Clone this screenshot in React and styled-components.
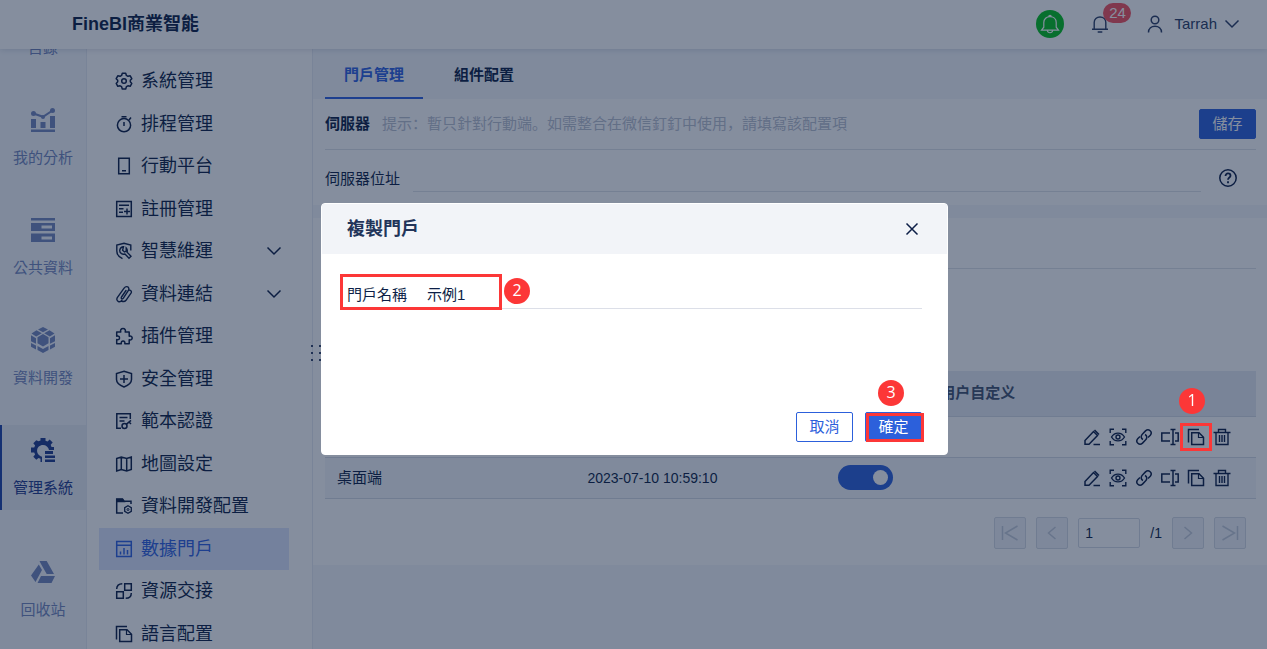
import React, { useState } from 'react';
import styled, { createGlobalStyle } from 'styled-components';

const GlobalStyle = createGlobalStyle`
  * {
    box-sizing: border-box;
  }
  body {
    margin: 0;
    overflow: hidden;
    background: #f4f7fb;
    color: #0d1f47;
    font-family: 'Liberation Sans', 'Noto Sans CJK TC', sans-serif;
    font-size: 15px;
    line-height: 20px;
  }
  h1, h2, ul {
    margin: 0;
    padding: 0;
  }
  ul {
    list-style: none;
  }
  a {
    color: inherit;
    text-decoration: none;
  }
  button, input {
    font: inherit;
    color: inherit;
  }
`;

//Icons
const Icon = ({ size = 18, children, ...rest }) => (
  <svg
    width={size}
    height={size}
    viewBox={`0 0 ${size} ${size}`}
    fill='none'
    stroke='currentColor'
    strokeWidth='1.5'
    aria-hidden='true'
    {...rest}
  >
    {children}
  </svg>
);

const GearIcon = () => (
  <Icon strokeLinejoin='round'>
    <path d='M7.3 1.2h3.4l.7 2.2 1.5.9 2.3-.5 1.6 2.9-1.5 1.6v1.5l1.5 1.6-1.6 2.9-2.3-.5-1.5.9-.7 2.2H7.3l-.7-2.2-1.5-.9-2.3.5-1.6-2.9 1.5-1.6V8.3L1.2 6.7l1.6-2.9 2.3.5 1.5-.9z' />
    <circle cx='9' cy='9' r='2.3' />
  </Icon>
);

const TimerIcon = () => (
  <Icon>
    <circle cx='9' cy='10.2' r='6.6' />
    <path d='M6.5 1.7h5M9 7v4M14 5l2-2.5' />
  </Icon>
);

const PhoneIcon = () => (
  <Icon>
    <path d='M3.7 1.2h10.6v15.6H3.7zM7 13.7h4' />
  </Icon>
);

const RegisterIcon = () => (
  <Icon>
    <path d='M1.7 1.5h14.6v15H1.7zM4 5.2h10M4 8.7h4.5M4 12.2h4M12 8.5v6M9 11.5h6' />
  </Icon>
);

const OpsIcon = () => (
  <Icon strokeWidth='1.4'>
    <path d='M15.8 8.5V3L9 1.2 1.8 3v6c0 3.5 2 6 5.7 7.7' />
    <path d='M8.5 4.7c-4 .3-5 5-2 7 1.3.8 2.5.7 3.5.3l4 4.2 2-2-4-4c.8-2 0-3.3-.8-4.2v3L9.5 10 7.6 8.2z' />
  </Icon>
);

const ClipIcon = () => (
  <Icon strokeWidth='1.4' strokeLinecap='round'>
    <path d='M11 5.5 6.5 12c-.9 1.5.9 2.6 1.9 1.2l5-7.7C15.2 2.2 11.3.1 9.1 3.2L2.3 12.7c-1.8 3.3 2.4 5.600 4.600 2.500M13.800 5.200c2-.5 3.200 1.300 2.200 3L11 15.300c-1 1.300-2.600 1.500-4.100 1' />
  </Icon>
);

const PuzzleIcon = () => (
  <Icon strokeLinejoin='round'>
    <path d='M1.7 5h4.1c-.8-2 .4-3.4 2.2-3.4S11 3 10.2 5h4v4.2c1.7-.6 3 .4 3 1.8s-1.300 2.400-3 1.800v4H9.800c.4-2-.4-2.700-1.700-2.700s-2.200.700-1.800 2.700H1.700v-4.200c2 .4 2.800-.4 2.800-1.700S3.700 8.800 1.700 9.200z' />
  </Icon>
);

const ShieldIcon = () => (
  <Icon>
    <path d='M9 1.2 16.5 3.5v6c0 3.3-2.8 5.7-7.5 7.5-4.7-1.8-7.5-4.2-7.5-7.5v-6zM9 5v8M5 9h8' />
  </Icon>
);

const CertIcon = () => (
  <Icon>
    <path d='M15.3 7V1.7H1.8v14.6H6M4.500 5.500h8M4.500 9h5' />
    <circle cx='9.5' cy='14' r='2.5' />
    <path d='m11.2 12.3 4.8-4M14 10l2 2' />
  </Icon>
);

const MapIcon = () => (
  <Icon>
    <path d='M1.7 3.5 6.3 2l5.4 1.5L16.3 2v12.5L11.7 16l-5.400-1.500L1.700 16zM6.300 2v12.500M11.700 3.500V16' />
  </Icon>
);

const FolderGearIcon = () => (
  <Icon>
    <path d='M16 7V4.2H9L7.5 2H1.7v14H8' />
    <path d='M2 2.5h5.5L9 4.5H2z' fill='currentColor' />
    <path d='m13 8.7 3.3 1.9v3.7L13 16.2l-3.3-1.9v-3.7z' strokeWidth='1.3' />
    <circle cx='13' cy='12.5' r='1' strokeWidth='1' />
  </Icon>
);

const PortalIcon = () => (
  <Icon>
    <path d='M1.7 1.5h14.6v15H1.7zM1.7 5.2h14.6M5.5 11.5v3M9 8v6.5M12.5 10v4.5' />
  </Icon>
);

const SwapIcon = () => (
  <Icon>
    <path d='M9.7 1.7h6.6v6.6H9.7zM1.7 9.7h6.6v6.6H1.7zM1.7 7c0-3.3 2-5.3 5.6-5.3M16.3 11c0 3.3-2 5.3-5.6 5.3' />
  </Icon>
);

const CopyIcon = () => (
  <Icon>
    <path d='M1.5 14.5V1.5H12M4.700 4.700h7.300l4.500 4.500v7.300H4.700z' />
    <path d='M11.500 5v4.500h4.500' strokeWidth='1.200' />
  </Icon>
);

const EditIcon = () => (
  <Icon>
    <path d='m2 12.5 8.500-9 4 4-8.500 8.700H2zM11.500 2l4.500 4.500M10.500 16.500H17' />
  </Icon>
);

const PreviewIcon = () => (
  <Icon strokeWidth='1.4'>
    <path d='M1.2 5V1.2H5M13 1.2h3.8V5M16.8 13v3.8H13M5 16.8H1.2V13' />
    <path d='M2.5 9C5.5 3.8 12.5 3.8 15.5 9c-3 5.2-10 5.2-13 0z' />
    <circle cx='9' cy='9' r='2' />
  </Icon>
);

const LinkIcon = () => (
  <Icon>
    <path d='M8 11.5C5.5 10.3 6 7.5 7.3 6.2l3.2-3.3c3.2-3 7.5 1 4.800 4.300l-2.300 2.300' />
    <path d='M10 6.5c2.500 1.200 2 4 .7 5.300l-3.200 3.300c-3.200 3-7.500-1-4.800-4.300L5 8.500' />
  </Icon>
);

const RenameIcon = () => (
  <Icon>
    <path d='M9 5H.8v8H9M14 5h3.2v8H14M12 1.500v15M9.500 1.500h5M9.500 16.500h5' />
  </Icon>
);

const TrashIcon = () => (
  <Icon strokeWidth='1.4'>
    <path d='M.5 4.500h17M5.500 4.500V1.500h7v3M3 4.500v12h12v-12M6.500 7v7M9 7v7M11.500 7v7' />
  </Icon>
);

const ChevronIcon = () => (
  <Icon size={16}>
    <path d='m1.500 4.500 6.500 6.500 6.500-6.500' />
  </Icon>
);

const CloseIcon = () => (
  <Icon size={14}>
    <path d='m1.500 1.500 11 11m0-11-11 11' />
  </Icon>
);

const HelpIcon = () => (
  <Icon size={20}>
    <circle cx='10' cy='10' r='8.2' />
    <path d='M7.5 8c0-3.500 5-3.200 5-.3 0 1.800-2.500 1.800-2.500 4M10 13.200v2' strokeWidth='1.800' />
  </Icon>
);

const BellIcon = () => (
  <Icon strokeWidth='1.4'>
    <path d='M1 14.200h16M3.200 14V7.500C3.200 4.200 5.700 2 9 2s5.800 2.200 5.800 5.500V14M6.700 17h4.600' />
  </Icon>
);

const AlarmIcon = () => (
  <Icon size={20} strokeWidth='1.2'>
    <path d='M1.500 16.200h17l-2.300-3V8.500C16.200 5 13.500 2.700 10 2.700S3.800 5 3.800 8.500v4.700zM7.300 16.500c.5 3 4.900 3 5.400 0M8.800 2.500c0-1.500 2.400-1.500 2.400 0' />
  </Icon>
);

const UserIcon = () => (
  <Icon>
    <circle cx='9' cy='5' r='3.8' />
    <path d='M2.500 17.500c0-4 3-6.300 6.500-6.300s6.500 2.300 6.500 6.300' />
  </Icon>
);

const ChartRailIcon = () => (
  <Icon size={24} stroke='none' fill='currentColor'>
    <path d='M0 21.500h24V24H0zM0 11h5v9H0zM9.500 14h5v6h-5zM19 8h5v12h-5z' />
    <circle cx='2.500' cy='5.500' r='2.500' />
    <circle cx='12' cy='9' r='2' />
    <circle cx='21.500' cy='2.500' r='2.500' />
    <path d='m2.500 5.500 9.500 3.300 9.500-6.300' fill='none' stroke='currentColor' strokeWidth='2' />
  </Icon>
);

const TableRailIcon = () => (
  <Icon size={24} stroke='none' fill='currentColor'>
    <path d='M0 0h24v2.500H0z' />
    <path fillRule='evenodd' d='M0 5h24v8H0zM10.500 7.500v3H21v-3zM0 15.500h24V24H0zM10.500 18.500v3H21v-3z' />
  </Icon>
);

const CubeRailIcon = () => (
  <Icon size={26} stroke='none' fill='currentColor'>
    <path d='m13 0 5 2.500-5 2.700-5-2.700zM6.500 3.200l5.300 3-5.600 3.200L1.500 6.500zM19.500 3.200l5 3.300-4.700 2.900-5.600-3.200zM13 7l5.500 3.200v6L13 19.500l-5.500-3.300v-6zM1 8.200l5 3v5.600l-5-2.500zM25 8.200v6.100l-5 2.500v-5.600zM1 16l5 2.500v4L1 19.800zM25 16v3.800l-5 2.700v-4zM7.500 19l5.500 3 5.500-3v4L13 26l-5.500-3z' />
  </Icon>
);

const SystemRailIcon = () => (
  <Icon size={24} stroke='none' fill='currentColor'>
    <path d='M9.500 0h5v2.700l2 .8 2.200-2 3 3-2 2.300.8 2.200H23v3h-5c-.5-3-3-5-6-5-7 0-8.300 9.500-1 11.700V24H9.500v-3.200l-2-.8-2.200 1.800-3-3 1.800-2.200-.9-2.100H0v-5h3.200l.9-2-1.800-2.200 3-3L7.500 3.300l2-.8z' />
    <path d='M14 13h8v3h-8zM14 17.500h10v2.500H14zM14 21.500h10V24H14z' />
  </Icon>
);

const RecycleRailIcon = () => (
  <Icon size={24} stroke='none' fill='currentColor'>
    <path d='M8.500 1h7.200l7.300 13h-7.300L10 4zM7.800 4.500 11 10 4.500 22 0 15.500zM10 16h14l-3.500 7H6.500z' />
  </Icon>
);

const railItems = [
  { label: '目錄', icon: TableRailIcon },
  { label: '我的分析', icon: ChartRailIcon },
  { label: '公共資料', icon: TableRailIcon },
  { label: '資料開發', icon: CubeRailIcon },
  { label: '管理系統', icon: SystemRailIcon, active: true },
  { label: '回收站', icon: RecycleRailIcon, apart: true },
];

const menuItems = [
  { label: '系統管理', icon: GearIcon },
  { label: '排程管理', icon: TimerIcon },
  { label: '行動平台', icon: PhoneIcon },
  { label: '註冊管理', icon: RegisterIcon },
  { label: '智慧維運', icon: OpsIcon, expandable: true },
  { label: '資料連結', icon: ClipIcon, expandable: true },
  { label: '插件管理', icon: PuzzleIcon },
  { label: '安全管理', icon: ShieldIcon },
  { label: '範本認證', icon: CertIcon },
  { label: '地圖設定', icon: MapIcon },
  { label: '資料開發配置', icon: FolderGearIcon },
  { label: '數據門戶', icon: PortalIcon, active: true },
  { label: '資源交接', icon: SwapIcon },
  { label: '語言配置', icon: CopyIcon },
];

const portals = [
  { name: '行動端', time: '2023-07-10 10:58:32', marked: true },
  { name: '桌面端', time: '2023-07-10 10:59:10', striped: true },
];

const actions = [
  { label: '編輯', icon: EditIcon },
  { label: '預覽', icon: PreviewIcon },
  { label: '連結', icon: LinkIcon },
  { label: '重命名', icon: RenameIcon },
  { label: '複製', icon: CopyIcon, copy: true },
  { label: '刪除', icon: TrashIcon },
];

const PortalTable = () => (
  <Table>
    <colgroup>
      <col style={{ width: '26.9%' }} />
      <col style={{ width: '26.9%' }} />
      <col style={{ width: '11%' }} />
      <col />
      <col style={{ width: 186 }} />
    </colgroup>
    <thead>
      <tr>
        <th>名稱</th>
        <th>更新時間</th>
        <th>啟用</th>
        <th>用户自定义</th>
        <th aria-label='操作' />
      </tr>
    </thead>
    <tbody>
      {portals.map(portal => (
        <Row key={portal.name} $striped={portal.striped}>
          <td>{portal.name}</td>
          <td>
            <Time>{portal.time}</Time>
          </td>
          <td>
            <Toggle
              type='checkbox'
              role='switch'
              aria-label={`${portal.name}啟用`}
              defaultChecked
            />
          </td>
          <td />
          <td>
            <Actions>
              {actions.map(({ label, icon: Glyph, copy }) => (
                <IconButton key={label} aria-label={label}>
                  <Glyph />
                  {copy && portal.marked && (
                    <CopyMark>
                      <Step>1</Step>
                    </CopyMark>
                  )}
                </IconButton>
              ))}
            </Actions>
          </td>
        </Row>
      ))}
    </tbody>
  </Table>
);

const CopyDialog = () => {
  const [name, setName] = useState('示例1');

  return (
    <Overlay>
      <Dialog role='dialog' aria-modal='true' aria-labelledby='dialog-title'>
        <DialogHead>
          <h2 id='dialog-title'>複製門戶</h2>
          <IconButton aria-label='關閉'>
            <CloseIcon />
          </IconButton>
        </DialogHead>
        <DialogBody>
          <Field>
            <label htmlFor='portal-name'>門戶名稱</label>
            <NameInput
              id='portal-name'
              value={name}
              onChange={e => setName(e.target.value)}
            />
            <FieldMark>
              <Step>2</Step>
            </FieldMark>
          </Field>
        </DialogBody>
        <DialogFoot>
          <Button $outline>取消</Button>
          <Button>
            確定
            <ConfirmMark>
              <Step>3</Step>
            </ConfirmMark>
          </Button>
        </DialogFoot>
      </Dialog>
    </Overlay>
  );
};

const App = () => {
  return (
    <Page>
      <GlobalStyle />
      <Header>
        <h1>FineBI商業智能</h1>
        <HeaderTools>
          <Alarm aria-label='提醒'>
            <AlarmIcon />
          </Alarm>
          <Notice aria-label='訊息'>
            <BellIcon />
            <Count>24</Count>
          </Notice>
          <Account>
            <UserIcon />
            Tarrah
            <ChevronIcon />
          </Account>
        </HeaderTools>
      </Header>
      <Body>
        <Rail>
          {railItems.map(({ label, icon: Glyph, active, apart }) => (
            <RailItem key={label} href='#' $active={active} $apart={apart}>
              <RailGlyph>
                <Glyph />
              </RailGlyph>
              {label}
            </RailItem>
          ))}
        </Rail>
        <SidePanel>
          <Menu>
            {menuItems.map(({ label, icon: Glyph, active, expandable }) => (
              <li key={label}>
                <MenuItem href='#' $active={active}>
                  <Glyph />
                  <span>{label}</span>
                  {expandable && <ChevronIcon />}
                </MenuItem>
              </li>
            ))}
          </Menu>
          <Grip>
            {[0, 1, 2, 3, 4, 5].map(dot => (
              <i key={dot} />
            ))}
          </Grip>
        </SidePanel>
        <Main>
          <Tabs>
            <Tab $active>門戶管理</Tab>
            <Tab>組件配置</Tab>
          </Tabs>
          <Section>
            <SectionHead>
              <strong>伺服器</strong>
              <Hint>
                提示：暫只針對行動端。如需整合在微信釘釘中使用，請填寫該配置項
              </Hint>
              <Button>儲存</Button>
            </SectionHead>
            <Address>
              <label htmlFor='server-address'>伺服器位址</label>
              <AddressInput id='server-address' />
              <IconButton aria-label='說明'>
                <HelpIcon />
              </IconButton>
            </Address>
          </Section>
          <PortalSection>
            <SectionHead />
            <PortalTable />
            <Pager>
              <PageButton aria-label='首頁' disabled>
                <Icon>
                  <path d='M1.5 2v14M16.5 2l-12 7 12 7' />
                </Icon>
              </PageButton>
              <PageButton aria-label='上一頁' disabled>
                <Icon>
                  <path d='m12.5 3-7 6 7 6' />
                </Icon>
              </PageButton>
              <PageInput aria-label='頁碼' defaultValue='1' />
              <span>/1</span>
              <PageButton aria-label='下一頁' disabled>
                <Icon>
                  <path d='m5.5 3 7 6-7 6' />
                </Icon>
              </PageButton>
              <PageButton aria-label='末頁' disabled>
                <Icon>
                  <path d='M16.5 2v14M1.5 2l12 7-12 7' />
                </Icon>
              </PageButton>
            </Pager>
          </PortalSection>
        </Main>
      </Body>
      <CopyDialog />
    </Page>
  );
};

const Page = styled.div`
  height: 100vh;
  display: flex;
  flex-direction: column;
  overflow: hidden;
`;

//Header
const Header = styled.header`
  position: relative;
  z-index: 1;
  flex: none;
  height: 49px;
  display: flex;
  align-items: center;
  justify-content: space-between;
  padding: 0 27px 1px 72px;
  background: #fff;
  box-shadow: 0 1px 6px rgba(13, 31, 71, 0.14);
  h1 {
    font-size: 18px;
    line-height: 24px;
  }
`;

const HeaderTools = styled.div`
  display: flex;
  align-items: center;
  color: #2b3d64;
`;

const PlainButton = styled.button`
  display: flex;
  align-items: center;
  padding: 0;
  border: 0;
  background: none;
  cursor: pointer;
`;

const Alarm = styled(PlainButton)`
  justify-content: center;
  width: 28px;
  height: 28px;
  border-radius: 50%;
  background: #04c11f;
  color: #fff;
`;

const Notice = styled(PlainButton)`
  position: relative;
  margin: 0 37px 0 27px;
`;

const Count = styled.span`
  position: absolute;
  left: 12px;
  bottom: 10px;
  width: 28px;
  border-radius: 10px;
  background: #f5525e;
  color: #fff;
  text-align: center;
`;

const Account = styled(PlainButton)`
  gap: 7px;
  svg:first-child {
    margin-right: 3px;
  }
`;

//Navigation
const Body = styled.div`
  flex: 1;
  min-height: 0;
  display: flex;
`;

const Rail = styled.nav`
  flex: none;
  width: 87px;
  overflow: hidden;
  border-right: 1px solid #e6eaf2;
`;

const RailItem = styled.a`
  display: flex;
  flex-direction: column;
  align-items: center;
  height: 85px;
  padding-top: 12px;
  margin-top: ${({ $apart }) => ($apart ? '37px' : '25px')};
  border-left: 2px solid ${({ $active }) => ($active ? '#1f45a8' : 'transparent')};
  border-right: 2px solid transparent;
  background: ${({ $active }) => ($active ? '#e8ecf2' : 'none')};
  color: ${({ $active }) => ($active ? '#1f3a8c' : '#7386bd')};
  /* the list is scrolled past its first entry */
  &:first-child {
    margin-top: -64px;
  }
`;

const RailGlyph = styled.span`
  display: flex;
  align-items: center;
  height: 26px;
  margin-bottom: 15px;
`;

const SidePanel = styled.aside`
  position: relative;
  flex: none;
  width: 226px;
  display: flex;
  padding: 11px 23px 0 12px;
  border-right: 1px solid #e6eaf2;
  background: #fff;
`;

const Menu = styled.ul`
  flex: 1;
  display: flex;
  flex-direction: column;
  justify-content: space-between;
  margin-bottom: -6px;
`;

const MenuItem = styled.a`
  display: flex;
  align-items: center;
  gap: 8px;
  height: 42px;
  padding: 0 7px 0 16px;
  font-size: 18px;
  line-height: 24px;
  color: ${({ $active }) => ($active ? '#2f61e0' : 'inherit')};
  background: ${({ $active }) => ($active ? '#dde5fc' : 'none')};
  span {
    flex: 1;
  }
`;

const Grip = styled.div`
  position: absolute;
  top: 296px;
  right: -9px;
  display: grid;
  grid-template-columns: 2px 2px;
  gap: 5px 6px;
  i {
    height: 2px;
    background: #33456b;
  }
`;

//Content
const Main = styled.main`
  flex: 1;
  min-width: 0;
`;

const Tabs = styled.div`
  display: flex;
  gap: 12px;
  height: 50px;
  padding-left: 12px;
`;

const Tab = styled.button`
  padding: 4px 19px 0;
  border: 0;
  border-bottom: 2px solid ${({ $active }) => ($active ? '#2f61e0' : 'transparent')};
  background: none;
  font-weight: bold;
  color: ${({ $active }) => ($active ? '#2f61e0' : 'inherit')};
`;

const Section = styled.section`
  padding: 0 11px 13px 12px;
  background: #fff;
`;

const PortalSection = styled(Section)`
  margin-top: 13px;
  padding-bottom: 16px;
`;

const SectionHead = styled.div`
  display: flex;
  align-items: center;
  gap: 12px;
  height: 51px;
  border-bottom: 1px solid #dfe2e8;
`;

const Hint = styled.span`
  flex: 1;
  font-family: 'Liberation Sans', 'Noto Sans CJK SC', sans-serif;
  color: #b9c0cf;
`;

const Button = styled.button`
  position: relative;
  width: 57px;
  height: 30px;
  padding: 0;
  border: 1px solid #2c60db;
  border-radius: 2px;
  background: ${({ $outline }) => ($outline ? '#fff' : '#2c60db')};
  color: ${({ $outline }) => ($outline ? '#2c60db' : '#fff')};
`;

const Address = styled.div`
  display: flex;
  align-items: flex-end;
  gap: 13px;
  height: 42px;
  label {
    padding-bottom: 3px;
  }
  button {
    margin: 0 18px 4px 4px;
  }
`;

const AddressInput = styled.input`
  flex: 1;
  height: 30px;
  border: 0;
  border-bottom: 1px solid #dfe2e8;
  outline: 0;
  background: none;
`;

const IconButton = styled(PlainButton)`
  position: relative;
`;

const Table = styled.table`
  width: 100%;
  margin-top: 102px;
  table-layout: fixed;
  border-collapse: collapse;
  th, td {
    height: 41px;
    padding: 0 12px;
    border-bottom: 1px solid #d5dae4;
    text-align: left;
    white-space: nowrap;
  }
  th {
    height: 45px;
    background: #e7ebf2;
    color: #43536f;
  }
`;

const Row = styled.tr`
  background: ${({ $striped }) => ($striped ? '#f4f7fb' : '#fff')};
`;

const Time = styled.time`
  font-size: 14px;
`;

const Toggle = styled.input`
  appearance: none;
  display: flex;
  align-items: center;
  justify-content: flex-end;
  width: 55px;
  height: 25px;
  margin: 0;
  padding-right: 5px;
  border-radius: 13px;
  background: #2c60db;
  &::after {
    content: '';
    width: 15px;
    height: 15px;
    border-radius: 50%;
    background: #fff;
  }
`;

const Actions = styled.div`
  display: flex;
  justify-content: flex-end;
  gap: 8px;
  padding-right: 13px;
`;

const Pager = styled.div`
  display: flex;
  align-items: center;
  justify-content: flex-end;
  gap: 10px;
  padding: 18px 10px 0 0;
  font-size: 14px;
`;

const PageButton = styled.button`
  display: grid;
  place-items: center;
  width: 32px;
  height: 32px;
  padding: 0;
  border: 1px solid #d5dae4;
  border-radius: 2px;
  background: #f0f3f8;
  color: #c3cad8;
`;

const PageInput = styled.input`
  width: 62px;
  height: 30px;
  padding: 0 6px;
  border: 1px solid #d5dae4;
  border-radius: 2px;
  background: none;
`;

//Dialog
const Overlay = styled.div`
  position: fixed;
  inset: 0;
  z-index: 2;
  display: grid;
  place-items: center;
  padding: 9px 0 0 2px;
  background: rgba(11, 29, 61, 0.5);
`;

const Dialog = styled.div`
  width: 627px;
  max-width: 100%;
  border: 1px solid #fff;
  border-radius: 4px;
  background: #fff;
`;

const DialogHead = styled.div`
  display: flex;
  align-items: center;
  justify-content: space-between;
  height: 50px;
  padding: 0 28px 0 25px;
  background: #f2f4f8;
  h2 {
    font-size: 18px;
    line-height: 24px;
    color: #22355a;
  }
`;

const DialogBody = styled.div`
  height: 158px;
  padding: 25px 25px 0;
`;

const Field = styled.div`
  position: relative;
  display: flex;
  align-items: center;
  gap: 6px;
  height: 30px;
  label {
    padding-top: 2px;
  }
`;

const NameInput = styled.input`
  flex: 1;
  height: 30px;
  padding: 0 14px;
  border: 0;
  border-bottom: 1px solid #dcdfe8;
  outline: 0;
`;

const DialogFoot = styled.div`
  display: flex;
  justify-content: flex-end;
  gap: 12px;
  padding: 0 25px 12px;
`;

//Step marks
const Mark = styled.span`
  position: absolute;
  z-index: 3;
  border: 3px solid #fc3737;
  pointer-events: none;
`;

const Step = styled.b`
  position: absolute;
  width: 26px;
  height: 26px;
  border-radius: 50%;
  background: #fc3737;
  color: #fff;
  font: 16px/24px 'Open Sans', sans-serif;
  text-align: center;
`;

const CopyMark = styled(Mark)`
  inset: -5px -7px;
  ${Step} {
    left: -4px;
    bottom: 34px;
  }
`;

const FieldMark = styled(Mark)`
  left: -7px;
  top: -5px;
  width: 162px;
  height: 36px;
  ${Step} {
    left: 161px;
    top: 1px;
  }
`;

const ConfirmMark = styled(Mark)`
  inset: 0 -3px -1px 0;
  ${Step} {
    left: 9px;
    bottom: 33px;
  }
`;

export default App;
